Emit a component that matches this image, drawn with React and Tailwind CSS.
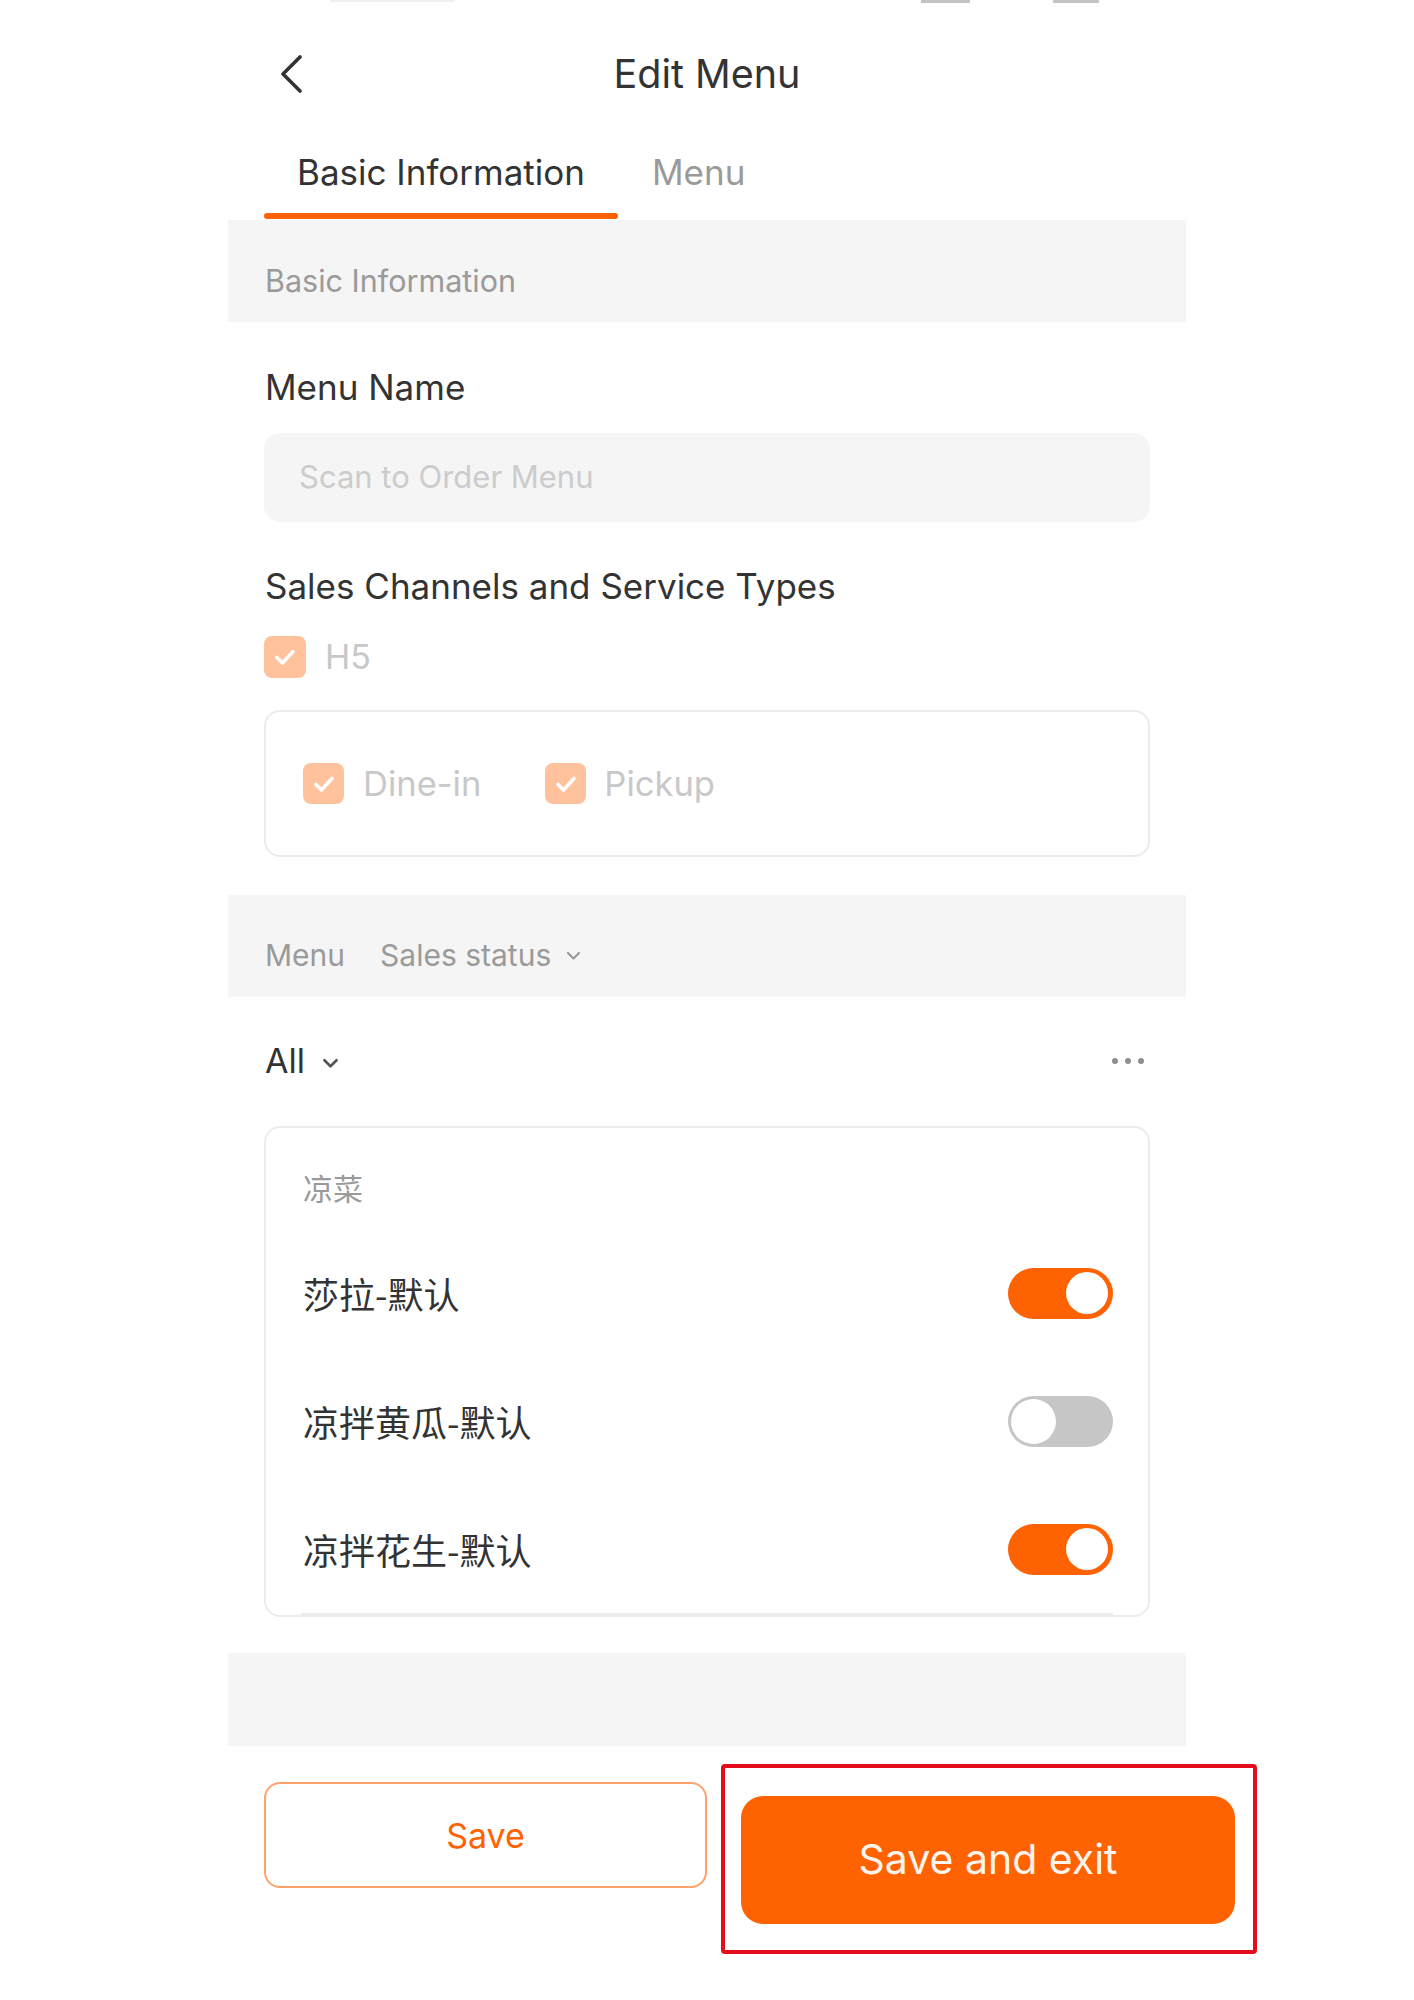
import React from "react";

const FONT = { fontFamily: 'Inter, "Noto Sans CJK SC", sans-serif' };
const CJK = { fontFamily: '"Noto Sans CJK SC", sans-serif' };

function Check({ size = 42 }) {
  return (
    <div
      className="flex items-center justify-center rounded-[8px] bg-[#ffc29c] shrink-0"
      style={{ width: size, height: size }}
    >
      <svg width="26" height="26" viewBox="0 0 26 26" fill="none">
        <polyline points="5,13.5 10.5,19 21,7.5" stroke="#ffffff" strokeWidth="3.6" strokeLinecap="round" strokeLinejoin="round" />
      </svg>
    </div>
  );
}

function Toggle({ on }) {
  if (on) {
    return (
      <div className="w-[105px] h-[51px] rounded-full bg-[#ff6200] flex items-center justify-end pr-[5px] shrink-0">
        <div className="w-[42px] h-[42px] rounded-full bg-white" />
      </div>
    );
  }
  return (
    <div className="w-[105px] h-[51px] rounded-full bg-[#c6c6c6] flex items-center justify-start pl-[3px] shrink-0">
      <div className="w-[45px] h-[45px] rounded-full bg-white" />
    </div>
  );
}

function Chevron({ color = "#999", w = 15, h = 10, sw = 2.2 }) {
  return (
    <svg width={w} height={h} viewBox="0 0 15 10" fill="none">
      <polyline points="2,2 7.5,7.5 13,2" stroke={color} strokeWidth={sw} strokeLinecap="round" strokeLinejoin="round" />
    </svg>
  );
}

export default function App() {
  const items = [
    { name: "莎拉-默认", on: true },
    { name: "凉拌黄瓜-默认", on: false },
    { name: "凉拌花生-默认", on: true },
  ];
  return (
    <div className="w-full min-h-[2000px] bg-white" style={FONT}>
      {/* status bar remnants */}
      <div className="h-[3px] flex">
        <div className="ml-[330px] w-[125px] h-[2px] bg-[#f0f0f0]" />
        <div className="ml-[466px] w-[49px] h-[3px] bg-[#c4c4c4]" />
        <div className="ml-[83px] w-[46px] h-[3px] bg-[#c4c4c4]" />
      </div>
      <div className="mx-auto w-[958px]">
        {/* header */}
        <div className="mt-[43px] h-[56px] grid grid-cols-[1fr_auto_1fr] items-center">
          <div className="pl-[52px] flex items-center">
            <svg width="24" height="38" viewBox="0 0 24 38" fill="none">
              <polyline points="20,2 3,19 20,36" stroke="#333333" strokeWidth="3.6" strokeLinecap="round" strokeLinejoin="round" />
            </svg>
          </div>
          <div className="text-[39.5px] leading-[56px] text-[#333333]">Edit Menu</div>
          <div />
        </div>

        {/* tabs */}
        <div className="mt-[50px] flex">
          <div className="ml-[36px] flex flex-col">
            <div className="px-[33px] text-[35px] leading-[40px] text-[#333333]">Basic Information</div>
            <div className="mt-[21px] h-[6px] rounded-full bg-[#ff6200]" />
          </div>
          <div className="ml-[1px] flex flex-col">
            <div className="px-[33px] text-[35px] leading-[40px] text-[#9a9a9a]">Menu</div>
          </div>
        </div>

        {/* basic info band */}
        <div className="mt-[1px] h-[102px] bg-[#f5f5f5] pt-[43px] pl-[37px]">
          <div className="text-[30.5px] leading-[36px] text-[#9a9a9a]">Basic Information</div>
        </div>

        <div className="px-[36px]">
          <div className="mt-[45px] text-[35px] leading-[40px] text-[#333333] pl-[1px]">Menu Name</div>
          <div className="mt-[26px] h-[89px] rounded-[16px] bg-[#f5f5f5] flex items-center pl-[35px]">
            <span className="text-[31px] text-[#cccccc]">Scan to Order Menu</span>
          </div>

          <div className="mt-[44px] text-[35px] leading-[40px] text-[#333333] pl-[1px]">Sales Channels and Service Types</div>
          <div className="mt-[30px] flex items-center gap-[19px]">
            <Check size={42} />
            <span className="text-[34px] leading-[40px] text-[#c8c8c8]">H5</span>
          </div>
          <div className="mt-[32px] h-[147px] rounded-[16px] border-2 border-[#ebebeb] flex items-center pl-[37px] gap-[64px]">
            <div className="flex items-center gap-[19px]">
              <Check size={41} />
              <span className="text-[34.5px] leading-[40px] text-[#c8c8c8]">Dine-in</span>
            </div>
            <div className="flex items-center gap-[18px]">
              <Check size={41} />
              <span className="text-[34.5px] leading-[40px] text-[#c8c8c8]">Pickup</span>
            </div>
          </div>
        </div>

        {/* menu band */}
        <div className="mt-[38px] h-[102px] bg-[#f5f5f5] pt-[42px] pl-[37px] flex items-start">
          <span className="text-[30px] leading-[36px] text-[#9a9a9a]">Menu</span>
          <span className="ml-[35px] text-[30px] leading-[36px] text-[#9a9a9a]">Sales status</span>
          <span className="ml-[15px] mt-[14px] flex">
            <Chevron color="#9a9a9a" w={15} h={10} sw={2.2} />
          </span>
        </div>

        <div className="px-[36px]">
          <div className="mt-[44px] h-[40px] flex items-center justify-between">
            <div className="flex items-center pl-[1px]">
              <span className="text-[34px] leading-[40px] text-[#333333]">All</span>
              <span className="ml-[17px] mt-[4px] flex">
                <Chevron color="#555555" w={17} h={11} sw={2.4} />
              </span>
            </div>
            <div className="flex items-center gap-[7px] pr-[6px]">
              <div className="w-[6px] h-[6px] rounded-full bg-[#8f8f8f]" />
              <div className="w-[6px] h-[6px] rounded-full bg-[#8f8f8f]" />
              <div className="w-[6px] h-[6px] rounded-full bg-[#8f8f8f]" />
            </div>
          </div>

          <div className="mt-[45px] rounded-[16px] border-2 border-[#ececec]">
            <div className="pt-[41px] pl-[37px] text-[30px] leading-[36px] text-[#9a9a9a]" style={CJK}>
              凉菜
            </div>
            <div className="mt-[24px]">
              {items.map((it) => (
                <div key={it.name} className="h-[128px] flex items-center justify-between pl-[37px] pr-[35px]">
                  <span className="text-[36px] leading-[44px] text-[#333333]" style={CJK}>
                    {it.name}
                  </span>
                  <Toggle on={it.on} />
                </div>
              ))}
            </div>
            <div className="mx-[35px] h-[2px] bg-[#ececec]" />
          </div>
        </div>

        {/* bottom band */}
        <div className="mt-[36px] h-[93px] bg-[#f5f5f5]" />

        {/* buttons */}
        <div className="mt-[18px] flex items-start pl-[36px]">
          <div className="mt-[18px] w-[443px] h-[106px] rounded-[16px] border-2 border-[#ffa26c] flex items-center justify-center shrink-0">
            <span className="text-[34px] text-[#ff6200]">Save</span>
          </div>
          <div className="ml-[14px] w-[536px] h-[190px] border-4 border-[#e30e19] rounded-[4px] flex items-center pl-[16px] pt-[2px] shrink-0">
            <div className="w-[494px] h-[128px] rounded-[22px] bg-[#ff6200] flex items-center justify-center">
              <span className="text-[41px] text-[#fff4ee]">Save and exit</span>
            </div>
          </div>
        </div>
      </div>
    </div>
  );
}
